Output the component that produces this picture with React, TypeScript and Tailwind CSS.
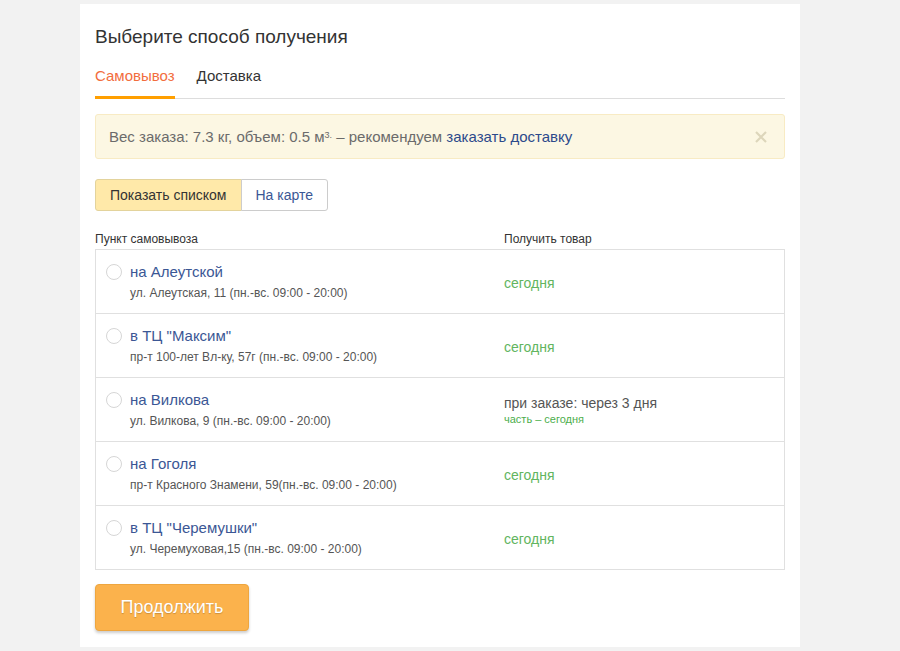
import React from "react";

const rows = [
  { name: "на Алеутской", addr: "ул. Алеутская, 11 (пн.-вс. 09:00 - 20:00)", when: "today" },
  { name: 'в ТЦ "Максим"', addr: "пр-т 100-лет Вл-ку, 57г (пн.-вс. 09:00 - 20:00)", when: "today" },
  { name: "на Вилкова", addr: "ул. Вилкова, 9 (пн.-вс. 09:00 - 20:00)", when: "later" },
  { name: "на Гоголя", addr: "пр-т Красного Знамени, 59(пн.-вс. 09:00 - 20:00)", when: "today" },
  { name: 'в ТЦ "Черемушки"', addr: "ул. Черемуховая,15 (пн.-вс. 09:00 - 20:00)", when: "today" },
];

export default function App() {
  return (
    <div
      className="min-h-screen bg-[#f2f2f2] pt-[4px]"
      style={{ fontFamily: '"Liberation Sans", Arial, sans-serif' }}
    >
      <div className="ml-[80px] w-[720px] bg-white px-[15px] pt-[21px] pb-[16px]">
        <h1 className="text-[19px] leading-[24px] text-[#333]">Выберите способ получения</h1>

        <div className="mt-[17px] flex gap-[22px] border-b border-[#dddddd]">
          <div className="-mb-px border-b-[3px] border-[#ff9f00] pb-[10px] text-[15px] leading-[20px] text-[#f26d3d]">
            Самовывоз
          </div>
          <div className="-mb-px border-b-[3px] border-transparent pb-[10px] text-[15px] leading-[20px] text-[#333]">
            Доставка
          </div>
        </div>

        <div className="mt-[15px] flex items-center justify-between rounded-[3px] border border-[#f8ebc4] bg-[#fcf7e3] py-[12px] pl-[13px] pr-[17px] text-[15px] leading-[19px] text-[#6b6b6b]">
          <div>
            Вес заказа: 7.3 кг, объем: 0.5 м<sup className="text-[9px]">3.</sup> – рекомендуем{" "}
            <span className="text-[#2c4a8b]">заказать доставку</span>
          </div>
          <svg width="12" height="12" viewBox="0 0 12 12" className="text-[#ddd6bb]">
            <path d="M1 1 L11 11 M11 1 L1 11" stroke="currentColor" strokeWidth="2.2" />
          </svg>
        </div>

        <div className="mt-[20px] flex text-[14px]">
          <div className="flex h-[32px] items-center rounded-l-[3px] border border-[#e3d39c] bg-[#ffe9a9] px-[14px] text-[#333]">
            Показать списком
          </div>
          <div className="-ml-px flex h-[32px] items-center rounded-r-[3px] border border-[#cccccc] bg-white px-[14px] text-[#3b5795]">
            На карте
          </div>
        </div>

        <div className="mt-[20px] flex text-[12px] leading-[16px] text-[#333]">
          <div className="w-[409px]">Пункт самовывоза</div>
          <div>Получить товар</div>
        </div>

        <div className="mt-[2px] border border-[#e0e0e0]">
          {rows.map((r, i) => (
            <div
              key={i}
              className={`flex items-center ${i > 0 ? "h-[64px] border-t border-[#e0e0e0]" : "h-[63px]"}`}
            >
              <div className="flex w-[408px] items-start pl-[10px]">
                <div className="mt-[1px] h-[16px] w-[16px] rounded-full border border-[#d6d6d6] bg-white"></div>
                <div className="ml-[8px]">
                  <div className="text-[15px] leading-[18px] text-[#3b5795]">{r.name}</div>
                  <div className="mt-[5px] text-[12px] leading-[14px] text-[#555]">{r.addr}</div>
                </div>
              </div>
              <div>
                {r.when === "today" ? (
                  <div className="pt-[3px] text-[14px] leading-[18px] text-[#62b560]">сегодня</div>
                ) : (
                  <div>
                    <div className="text-[14px] leading-[18px] text-[#555]">при заказе: через 3 дня</div>
                    <div className="mt-[1px] text-[11px] leading-[13px] text-[#4cae4c]">часть – сегодня</div>
                  </div>
                )}
              </div>
            </div>
          ))}
        </div>

        <button
          className="mt-[14px] h-[47px] w-[154px] rounded-[4px] border border-[#eea63f] bg-[#fbb24c] text-[18px] text-white shadow-[0_2px_3px_rgba(0,0,0,0.2)]"
          style={{ textShadow: "0 1px 1px rgba(0,0,0,0.2)" }}
        >
          Продолжить
        </button>
      </div>
    </div>
  );
}
